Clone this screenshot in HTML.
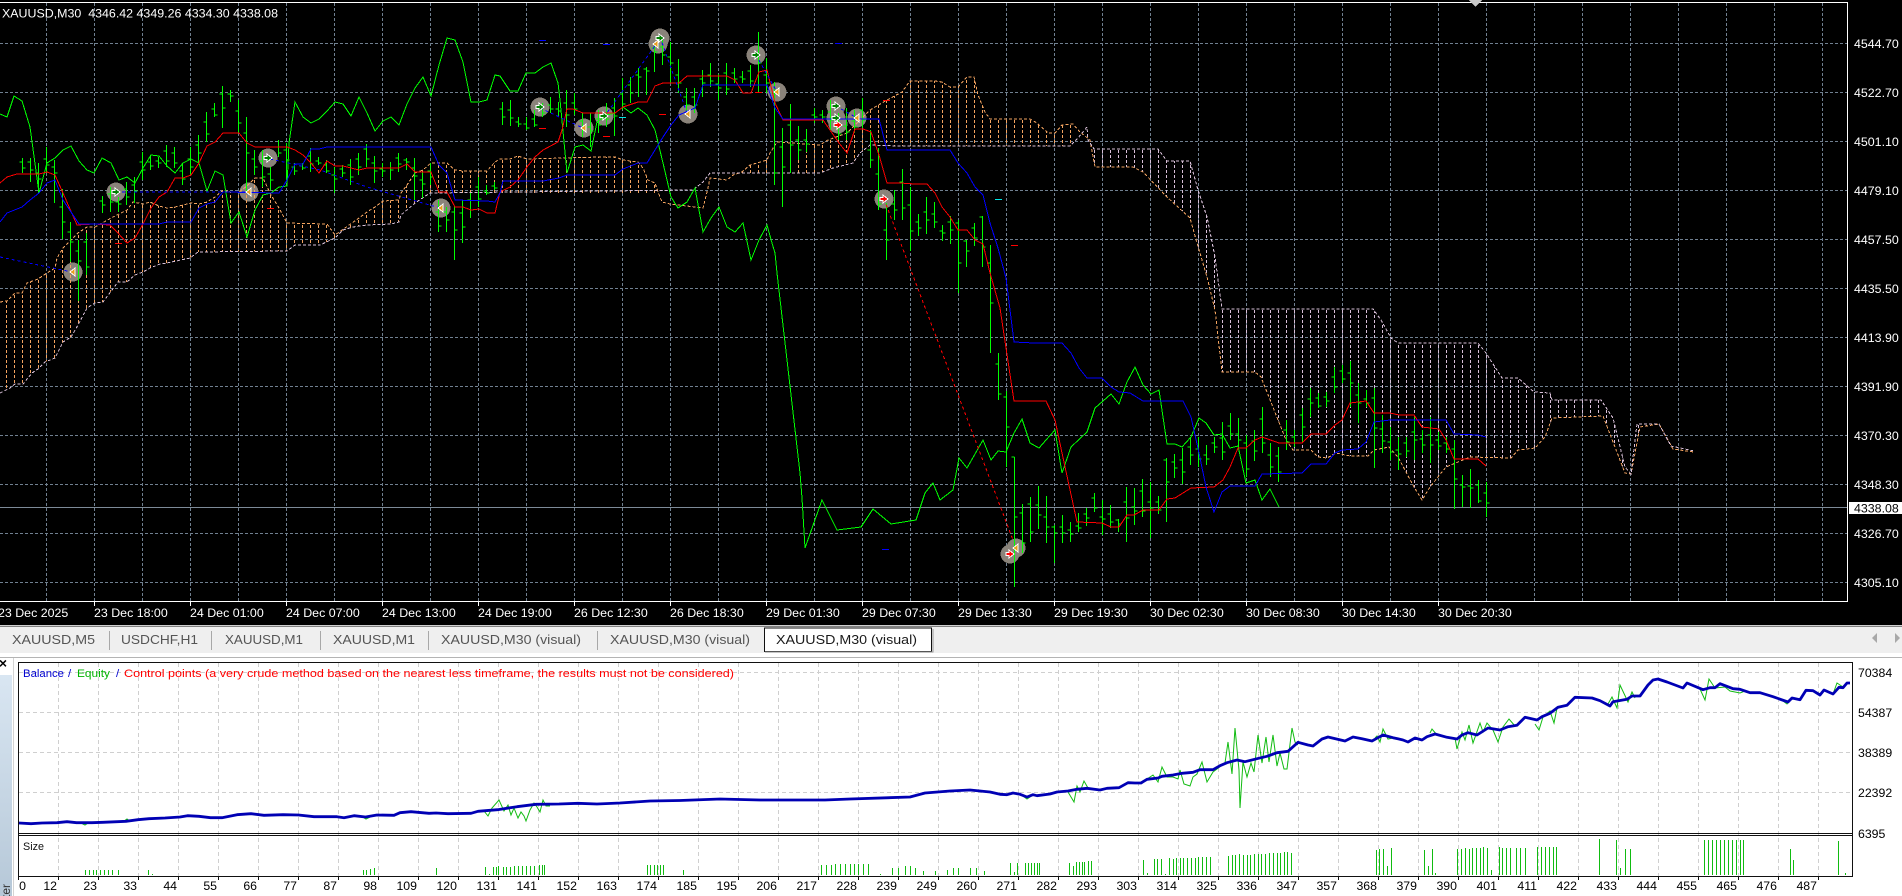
<!DOCTYPE html>
<html lang="en">
<head>
<meta charset="utf-8">
<title>XAUUSD,M30 (visual)</title>
<style>
html,body{margin:0;padding:0;background:#fff;width:1902px;height:896px;overflow:hidden}
svg{display:block;font-family:"Liberation Sans",Arial,sans-serif}
.ax{font-size:12.4px;fill:#fff}
.lb{font-size:12.3px;fill:#000}
.tb{font-size:13px;fill:#555}
</style>
</head>
<body>
<svg width="1902" height="896" viewBox="0 0 1902 896" xmlns="http://www.w3.org/2000/svg">
<defs>
<clipPath id="ca"><polygon points="0,302 7,301 15,293 22,293 27,283 38,279 47,273 55,268 57,258 63,248 78,233 87,227 95,227 113,217 127,210 133,202 143,204 150,202 159,206 167,208 175,207 183,205 191,203 199,204 207,202 215,197 223,190 231,192 239,192 247,186 255,178 263,178 271,195 279,208 287,223 327,224 335,235 359,218 367,212 375,207 383,201 399,200 401,193 407,185 415,173 423,170 431,163 447,163 455,170 463,171 487,171 495,162 500,159 510,159 518,156 527,159 600,157 615,157 623,160 638,162 643,168 648,180 655,183 658,193 500,193 430,193 415,203 401,215 399,222 391,224 367,225 353,227 343,230 335,238 320,245 295,245 287,251 198,252 190,258 167,263 160,264 150,268 143,272 135,275 127,282 118,282 112,290 103,302 95,303 87,308 78,325 71,337 63,342 55,358 45,362 38,369 32,373 23,384 15,384 10,388 0,393"/></clipPath>
<clipPath id="cb"><polygon points="735,173 742,172 750,165 767,160 770,153 777,142 820,145 828,140 847,133 870,110 887,100 902,92 910,81 935,81 942,82 950,87 958,87 967,77 974,77 978,95 985,112 990,119 1030,119 1037,123 1048,133 1055,133 1062,125 1073,124 1078,138 1070,146 900,146 870,145 860,153 853,163 833,168 820,173"/></clipPath>
<clipPath id="cc"><polygon points="1088,140 1094,149 1158,149 1167,161 1190,161 1198,190 1207,217 1215,257 1222,309 1373,309 1381,320 1391,338 1398,343 1478,343 1486,353 1502,378 1518,378 1534,392 1550,393 1552,400 1601,400 1613,418 1625,467 1631,474 1637,424 1659,424 1671,446 1694,452 1673,449 1659,424 1640,427 1631,474 1625,473 1603,416 1552,418 1545,437 1535,448 1518,450 1511,458 1470,457 1446,467 1430,487 1422,500 1414,487 1398,457 1389,447 1374,450 1368,456 1350,456 1336,453 1327,458 1318,457 1311,450 1293,450 1286,440 1261,377 1255,372 1222,372 1215,310 1207,277 1197,243 1190,218 1167,197 1143,172 1133,167 1095,167 1090,140"/></clipPath>
<g id="ar"><polygon points="-4,-1.5 -1,-1.5 -1,-4 4,0 -1,4 -1,1.5 -4,1.5" fill="#008000" stroke="#fff"/></g>
<g id="ab"><polygon points="-4,-1.5 -1,-1.5 -1,-4 4,0 -1,4 -1,1.5 -4,1.5" fill="#ff0000" stroke="#fff"/></g>
<g id="al"><polygon points="2,-4 2,4 -3,0" fill="#e8a020" stroke="#fff"/></g>
</defs>

<!-- main chart background -->
<rect x="0" y="0" width="1902" height="625" fill="#000"/>
<g shape-rendering="crispEdges">
<path d="M46.5 3V601M94.5 3V601M142.5 3V601M190.5 3V601M238.5 3V601M286.5 3V601M334.5 3V601M382.5 3V601M430.5 3V601M478.5 3V601M526.5 3V601M574.5 3V601M622.5 3V601M670.5 3V601M718.5 3V601M766.5 3V601M814.5 3V601M862.5 3V601M910.5 3V601M958.5 3V601M1006.5 3V601M1054.5 3V601M1102.5 3V601M1150.5 3V601M1198.5 3V601M1246.5 3V601M1294.5 3V601M1342.5 3V601M1390.5 3V601M1438.5 3V601M1486.5 3V601M1534.5 3V601M1582.5 3V601M1630.5 3V601M1678.5 3V601M1726.5 3V601M1774.5 3V601M1822.5 3V601" stroke="#708090" stroke-dasharray="3 2" fill="none"/>
<path d="M0 43.5H1847M0 92.5H1847M0 141.5H1847M0 190.5H1847M0 239.5H1847M0 288.5H1847M0 337.5H1847M0 386.5H1847M0 435.5H1847M0 484.5H1847M0 533.5H1847M0 582.5H1847" stroke="#708090" stroke-dasharray="3 2" fill="none"/>
<path d="M0 507.5H1848" stroke="#7d8a98" fill="none"/>

<!-- marker discs -->
<g fill="#8a837a">
<circle cx="73" cy="272" r="9.5"/><circle cx="116" cy="192" r="9.5"/><circle cx="249" cy="192" r="9.5"/><circle cx="268" cy="158" r="9.5"/><circle cx="441" cy="208" r="9.5"/>
<circle cx="540" cy="107" r="9.5"/><circle cx="584" cy="128" r="9.5"/><circle cx="604" cy="116" r="9.5"/><circle cx="688" cy="114" r="9.5"/><circle cx="660" cy="38" r="9.5"/><circle cx="658" cy="44" r="9.5"/><circle cx="756" cy="55" r="9.5"/><circle cx="777" cy="92" r="9.5"/><circle cx="836" cy="106" r="9.5"/><circle cx="836" cy="118" r="9.5"/><circle cx="838" cy="124" r="9.5"/><circle cx="857" cy="118" r="9.5"/><circle cx="884" cy="199" r="9.5"/><circle cx="1010" cy="554" r="9.5"/><circle cx="1016" cy="548" r="9.5"/>
</g>

<!-- cloud hatching -->
<path clip-path="url(#ca)" fill="none" stroke="#f4a460" stroke-dasharray="3 2" d="M6.5 150v250m8-250v250m8-250v250m8-250v250m8-250v250m8-250v250m8-250v250m8-250v250m8-250v250m8-250v250m8-250v250m8-250v250m8-250v250m8-250v250m8-250v250m8-250v250m8-250v250m8-250v250m8-250v250m8-250v250m8-250v250m8-250v250m8-250v250m8-250v250m8-250v250m8-250v250m8-250v250m8-250v250m8-250v250m8-250v250m8-250v250m8-250v250m8-250v250m8-250v250m8-250v250m8-250v250m8-250v250m8-250v250m8-250v250m8-250v250m8-250v250m8-250v250m8-250v250m8-250v250m8-250v250m8-250v250m8-250v250m8-250v250m8-250v250m8-250v250m8-250v250m8-250v250m8-250v250m8-250v250m8-250v250m8-250v250m8-250v250m8-250v250m8-250v250m8-250v250m8-250v250m8-250v250m8-250v250m8-250v250m8-250v250m8-250v250m8-250v250m8-250v250m8-250v250m8-250v250m8-250v250m8-250v250m8-250v250m8-250v250m8-250v250m8-250v250m8-250v250m8-250v250m8-250v250m8-250v250m8-250v250m8-250v250m8-250v250m8-250v250"/>
<path clip-path="url(#cb)" fill="none" stroke="#f4a460" stroke-dasharray="3 2" d="M734.5 70v110m8-110v110m8-110v110m8-110v110m8-110v110m8-110v110m8-110v110m8-110v110m8-110v110m8-110v110m8-110v110m8-110v110m8-110v110m8-110v110m8-110v110m8-110v110m8-110v110m8-110v110m8-110v110m8-110v110m8-110v110m8-110v110m8-110v110m8-110v110m8-110v110m8-110v110m8-110v110m8-110v110m8-110v110m8-110v110m8-110v110m8-110v110m8-110v110m8-110v110m8-110v110m8-110v110m8-110v110m8-110v110m8-110v110m8-110v110m8-110v110m8-110v110m8-110v110m8-110v110"/>
<path clip-path="url(#cc)" fill="none" stroke="#d8bfd8" stroke-dasharray="3 2" d="M1094.5 130v380m8-380v380m8-380v380m8-380v380m8-380v380m8-380v380m8-380v380m8-380v380m8-380v380m8-380v380m8-380v380m8-380v380m8-380v380m8-380v380m8-380v380m8-380v380m8-380v380m8-380v380m8-380v380m8-380v380m8-380v380m8-380v380m8-380v380m8-380v380m8-380v380m8-380v380m8-380v380m8-380v380m8-380v380m8-380v380m8-380v380m8-380v380m8-380v380m8-380v380m8-380v380m8-380v380m8-380v380m8-380v380m8-380v380m8-380v380m8-380v380m8-380v380m8-380v380m8-380v380m8-380v380m8-380v380m8-380v380m8-380v380m8-380v380m8-380v380m8-380v380m8-380v380m8-380v380m8-380v380m8-380v380m8-380v380m8-380v380m8-380v380m8-380v380m8-380v380m8-380v380m8-380v380m8-380v380m8-380v380m8-380v380m8-380v380m8-380v380m8-380v380m8-380v380m8-380v380m8-380v380"/>

<!-- cloud edges -->
<g fill="none" stroke-dasharray="3 2">
<polyline stroke="#f4a460" points="0,302 7,301 15,293 22,293 27,283 38,279 47,273 55,268 57,258 63,248 78,233 87,227 95,227 113,217 127,210 133,202 143,204 150,202 159,206 167,208 175,207 183,205 191,203 199,204 207,202 215,197 223,190 231,192 239,192 247,186 255,178 263,178 271,195 279,208 287,223 327,224 335,235 359,218 367,212 375,207 383,201 399,200 401,193 407,185 415,173 423,170 431,163 447,163 455,170 463,171 487,171 495,162 500,159 510,159 518,156 527,159 600,157 615,157 623,160 638,162 643,168 648,180 655,183 658,192 662,202 670,204 695,207 703,208 705,200 708,188 710,178 727,180 733,175 742,172 750,165 767,160 770,153 777,142 820,145 828,140 847,133 870,110 887,100 902,92 910,81 935,81 942,82 950,87 958,87 967,77 974,77 978,95 985,112 990,119 1030,119 1037,123 1048,133 1055,133 1062,125 1073,124 1080,132 1090,140 1095,167 1133,167 1143,172 1167,197 1190,218 1197,243 1207,277 1215,310 1222,372 1255,372 1261,377 1286,440 1293,450 1311,450 1318,457 1327,458 1336,453 1350,456 1368,456 1374,450 1389,447 1398,457 1414,487 1422,500 1430,487 1446,467 1470,457 1511,458 1518,450 1535,448 1545,437 1552,418 1603,416 1625,473 1631,474 1640,427 1659,424 1673,449 1694,452"/>
<polyline stroke="#d8bfd8" points="0,393 10,388 15,384 23,384 32,373 38,369 45,362 55,358 63,342 71,337 78,325 87,308 95,303 103,302 112,290 118,282 127,282 135,275 143,272 150,268 160,264 167,263 190,258 198,252 287,251 295,245 320,245 335,238 343,230 353,227 367,225 391,224 399,222 401,215 415,203 430,193 693,190 703,182 710,173 820,173 833,168 853,163 860,153 870,145 900,146 1070,146 1078,138 1087,127 1088,140 1094,149 1158,149 1167,161 1190,161 1198,190 1207,217 1215,257 1222,309 1373,309 1381,320 1391,338 1398,343 1478,343 1486,353 1502,378 1518,378 1534,392 1550,393 1552,400 1601,400 1613,418 1625,467 1631,474 1637,424 1659,424 1671,446 1694,451"/>
</g>

<!-- OHLC bars -->
<path fill="none" stroke="#00ff00" d="M22.5 158V173m0-5h3m-6-6h3M30.5 158V182m0-12h3m-6-8h3M38.5 163V193m0-14h3m-6-6h3M46.5 147V173m0-8h3m-6-6h3M54.5 160V203m0-30h3m-6-6h3M62.5 189V239m0-17h3m-6-15h3M70.5 222V262m0-20h3m-6-10h3M78.5 240V301m0-40h3m-6-10h3M86.5 233V275m0-8h3m-6-25h3M102.5 196V213m0-8h3m-6-4h3M110.5 187V212m0-10h3m-6-8h3M118.5 197V212m0-8h3m-6-2h3M126.5 182V205m0-8h3m-6-8h3M134.5 177V203m0-12h3m-6-6h3M142.5 152V180m0-10h3m-6-8h3M150.5 155V170m0-4h3m-6-4h3M158.5 157V168m0-5h3m-6-2h3M166.5 145V167m0-6h3m-6-10h3M174.5 147V168m0-5h3m-6-10h3M182.5 163V185m0-6h3m-6-8h3M190.5 147V175m0-8h3m-6-8h3M198.5 135V163m0-10h3m-6-8h3M206.5 112V142m0-8h3m-6-12h3M214.5 103V117m0-2h3m-6-6h3M222.5 86V128m0-20h3m-6-14h3M230.5 90V102m0-6h3m-6-2h3M238.5 100V133m0-10h3m-6-12h3M246.5 117V193m0-40h3m-6-20h3M254.5 150V175m0-8h3m-6-8h3M262.5 150V187m0-10h3m-6-16h3M270.5 167V190m0-10h3m-6-6h3M278.5 140V157m0-4h3m-6-6h3M286.5 143V180m0-20h3m-6-10h3M294.5 163V175m0-4h3m-6-4h3M302.5 163V170m0-2h3m-6-2h3M310.5 148V172m0-8h3m-6-8h3M318.5 157V165m0-2h3m-6-2h3M326.5 160V173m0-2h3m-6-6h3M334.5 167V193m0-14h3m-6-4h3M342.5 165V177m0-4h3m-6-4h3M350.5 159V185m0-8h3m-6-12h3M358.5 153V175m0-8h3m-6-8h3M366.5 144V167m0-8h3m-6-10h3M374.5 156V183m0-12h3m-6-8h3M382.5 163V177m0-6h3m-6-2h3M390.5 162V180m0-10h3m-6-2h3M398.5 153V172m0-8h3m-6-6h3M406.5 158V170m0-8h3m-6-2h3M414.5 158V200m0-24h3m-6-8h3M422.5 172V198m0-14h3m-6-4h3M430.5 163V185m0-8h3m-6-6h3M438.5 200V232m0-6h3m-6-14h3M446.5 207V232m0-12h3m-6-8h3M454.5 206V260m0-30h3m-6-18h3M462.5 200V243m0-16h3m-6-14h3M470.5 193V218m0-8h3m-6-10h3M478.5 177V207m0-8h3m-6-12h3M486.5 185V195m0-2h3m-6-2h3M494.5 182V190m0-2h3m-6-2h3M502.5 102V125m0-8h3m-6-8h3M510.5 100V126m0-8h3m-6-8h3M518.5 117V127m0-3h3m-6-2h3M526.5 117V130m0-2h3m-6-4h3M534.5 110V127m0-2h3m-6-6h3M542.5 103V117m0-4h3m-6-4h3M550.5 97V113m0-4h3m-6-4h3M558.5 102V117m0-6h3m-6-2h3M566.5 90V127m0-12h3m-6-12h3M574.5 93V115m0-6h3m-6-6h3M582.5 113V137m0-8h3m-6-8h3M590.5 113V147m0-16h3m-6-4h3M598.5 110V133m0-8h3m-6-6h3M606.5 103V127m0-8h3m-6-6h3M614.5 98V136m0-20h3m-6-8h3M622.5 78V110m0-6h3m-6-10h3M630.5 77V103m0-10h3m-6-8h3M638.5 68V97m0-20h3m-6-2h3M646.5 67V95m0-24h3m-6-2h3M654.5 43V72m0-20h3m-6-4h3M662.5 40V65m0-10h3m-6-8h3M670.5 42V83m0-20h3m-6-6h3M678.5 59V93m0-10h3m-6-8h3M686.5 88V113m0-8h3m-6-8h3M694.5 88V113m0-8h3m-6-8h3M702.5 70V97m0-14h3m-6-4h3M710.5 63V87m0-6h3m-6-6h3M718.5 74V100m0-12h3m-6-4h3M726.5 63V95m0-6h3m-6-16h3M734.5 68V83m0-4h3m-6-6h3M742.5 71V83m0-4h3m-6-2h3M750.5 65V87m0-6h3m-6-10h3M758.5 32V93m0-30h3m-6-8h3M766.5 58V93m0-10h3m-6-8h3M774.5 82V185m0-12h3m-6-80h3M782.5 128V207m0-40h3m-6-20h3M790.5 104V173m0-28h3m-6-20h3M798.5 126V160m0-10h3m-6-10h3M806.5 129V152m0-8h3m-6-4h3M814.5 108V123m0-6h3m-6-2h3M822.5 110V123m0-6h3m-6-2h3M830.5 100V130m0-10h3m-6-8h3M838.5 113V140m0-6h3m-6-6h3M846.5 108V140m0-8h3m-6-6h3M854.5 110V133m0-6h3m-6-6h3M862.5 98V128m0-8h3m-6-10h3M870.5 130V168m0-8h3m-6-10h3M878.5 148V210m0-6h3m-6-30h3M886.5 203V260m0-20h3m-6-10h3M894.5 190V220m0-10h3m-6-6h3M902.5 169V220m0-12h3m-6-26h3M910.5 187V251m0-20h3m-6-26h3M918.5 214V236m0-8h3m-6-6h3M926.5 197V234m0-14h3m-6-8h3M934.5 202V228m0-6h3m-6-8h3M942.5 225V241m0-8h3m-6-2h3M950.5 216V244m0-14h3m-6-8h3M958.5 220V293m0-30h3m-6-40h3M966.5 240V267m0-16h3m-6-10h3M974.5 223V246m0-8h3m-6-10h3M982.5 216V267m0-20h3m-6-30h3M990.5 245V353m0-50h3m-6-40h3M998.5 353V400m0-6h3m-6-30h3M1006.5 391V467m0-40h3m-6-30h3M1014.5 457V587m0-70h3m-6-60h3M1022.5 504V553m0-10h3m-6-30h3M1030.5 497V542m0-10h3m-6-28h3M1038.5 486V529m0-14h3m-6-10h3M1046.5 496V543m0-16h3m-6-10h3M1054.5 525V563m0-30h3m-6-6h3M1062.5 515V543m0-10h3m-6-6h3M1070.5 522V542m0-8h3m-6-4h3M1078.5 513V532m0-4h3m-6-2h3M1086.5 508V526m0-8h3m-6-4h3M1094.5 493V512m0-4h3m-6-10h3M1102.5 500V535m0-16h3m-6-2h3M1110.5 505V528m0-6h3m-6-8h3M1118.5 519V532m0-8h3m-6-4h3M1126.5 487V542m0-24h3m-6-16h3M1134.5 488V525m0-14h3m-6-4h3M1142.5 479V517m0-6h3m-6-20h3M1150.5 482V538m0-30h3m-6-6h3M1158.5 496V514m0-4h3m-6-8h3M1166.5 458V522m0-40h3m-6-22h3M1174.5 454V478m0-10h3m-6-6h3M1182.5 448V484m0-12h3m-6-12h3M1190.5 437V465m0-10h3m-6-8h3M1198.5 437V467m0-8h3m-6-10h3M1206.5 445V465m0-6h3m-6-4h3M1214.5 437V453m0-6h3m-6-4h3M1222.5 422V460m0-8h3m-6-14h3M1230.5 413V440m0-6h3m-6-8h3M1238.5 418V448m0-8h3m-6-6h3M1246.5 435V477m0-8h3m-6-26h3M1254.5 430V461m0-10h3m-6-10h3M1262.5 407V453m0-10h3m-6-24h3M1270.5 443V477m0-10h3m-6-12h3M1278.5 447V482m0-10h3m-6-16h3M1286.5 420V450m0-8h3m-6-12h3M1294.5 430V447m0-4h3m-6-6h3M1302.5 408V443m0-16h3m-6-12h3M1310.5 388V417m0-14h3m-6-4h3M1318.5 393V408m0-2h3m-6-8h3M1326.5 392V407m0-6h3m-6-4h3M1334.5 367V393m0-6h3m-6-10h3M1342.5 365V383m0-4h3m-6-8h3M1350.5 361V407m0-24h3m-6-10h3M1358.5 383V423m0-20h3m-6-8h3M1366.5 390V407m0-4h3m-6-4h3M1374.5 388V468m0-40h3m-6-30h3M1382.5 415V453m0-12h3m-6-12h3M1390.5 427V460m0-8h3m-6-10h3M1398.5 437V470m0-16h3m-6-4h3M1406.5 437V457m0-6h3m-6-8h3M1414.5 417V460m0-20h3m-6-8h3M1422.5 430V453m0-8h3m-6-6h3M1430.5 417V463m0-18h3m-6-10h3M1438.5 432V450m0-4h3m-6-6h3M1446.5 437V453m0-4h3m-6-6h3M1454.5 440V509m0-30h3m-6-30h3M1462.5 475V507m0-20h3m-6-2h3M1470.5 469V508m0-20h3m-6-2h3M1478.5 480V503m0-2h3m-6-16h3M1486.5 482V517m0-14h3m-6-10h3"/>

<!-- chikou -->
<polyline fill="none" stroke="#00ff00" points="0,114 7,117 14,96 22,101 30,127 39,193 47,163 55,158 63,150 71,146 79,161 87,170 94,173 102,158 111,163 119,180 127,177 135,183 143,168 151,155 159,156 167,166 175,173 183,163 191,159 199,163 207,191 215,171 223,175 231,223 239,212 247,237 255,210 263,195 271,193 279,187 287,186 289,143 295,102 303,117 311,123 319,119 327,111 335,102 343,104 351,116 359,97 367,113 375,131 383,121 391,117 399,125 407,104 415,88 423,77 431,96 439,65 447,38 455,40 463,62 471,102 479,102 487,100 495,75 500,76 510,91 518,91 526,73 535,73 543,67 551,63 558,83 560,100 567,173 575,147 583,145 591,151 597,122 607,115 615,113 623,107 631,113 638,108 647,115 655,130 663,163 671,197 678,208 687,202 695,188 703,232 711,218 719,207 727,227 735,232 743,223 751,260 759,240 767,225 772,243 775,253 777,273 800,473 802,498 805,548 822,500 837,530 861,527 873,509 891,524 916,520 925,493 933,483 940,500 953,490 959,458 967,468 983,440 991,460 998,451 1006,452 1014,433 1022,419 1030,443 1039,448 1046,440 1055,430 1062,473 1071,447 1087,432 1095,408 1111,394 1119,404 1127,382 1135,367 1143,385 1151,394 1159,390 1167,444 1175,444 1182,447 1191,437 1199,418 1206,423 1214,435 1222,434 1230,448 1238,446 1246,483 1255,480 1262,500 1270,489 1279,507"/>
<!-- tenkan -->
<polyline fill="none" stroke="#ff0000" points="0,183 7,177 17,174 39,174 47,172 55,175 63,193 77,225 94,224 110,225 118,233 127,243 135,238 143,224 151,208 159,197 167,192 175,178 183,178 191,175 199,163 207,146 215,142 223,133 239,133 247,143 255,147 287,147 295,150 303,155 311,163 319,173 327,161 335,166 343,166 359,170 367,168 399,168 407,164 415,172 431,172 439,192 447,192 455,207 463,207 471,210 479,209 487,213 495,213 500,192 510,187 518,180 527,167 535,157 543,150 558,142 562,130 567,109 573,109 583,113 615,113 623,107 638,102 647,102 655,86 663,83 679,83 687,76 727,76 735,80 743,93 751,93 759,72 767,70 775,103 783,120 823,120 839,143 847,153 855,129 863,129 871,132 879,155 887,183 900,183 915,184 927,184 935,193 942,207 950,217 958,230 967,230 975,240 983,244 990,273 1000,308 1014,401 1046,401 1055,420 1062,453 1077,522 1102,523 1111,527 1119,527 1127,515 1134,515 1143,510 1159,510 1167,499 1175,498 1191,488 1214,487 1223,480 1230,467 1238,448 1246,448 1255,440 1262,437 1279,443 1302,443 1311,434 1326,434 1335,425 1342,420 1350,403 1366,401 1374,413 1390,413 1399,415 1414,415 1422,427 1439,429 1446,440 1454,459 1478,459 1486,466"/>
<!-- kijun -->
<polyline fill="none" stroke="#0000ff" points="0,222 7,213 22,207 30,200 39,193 47,183 55,180 63,200 79,224 159,224 167,222 191,222 199,208 207,204 215,202 223,192 279,193 287,180 295,164 303,164 311,149 319,149 327,147 431,147 439,165 447,173 455,200 487,201 495,202 500,193 503,181 543,181 559,178 567,175 615,175 623,169 638,163 647,163 655,150 663,137 671,125 679,115 695,108 703,85 767,85 775,108 783,119 879,119 887,150 950,150 958,163 967,173 975,187 983,195 990,223 998,248 1006,278 1014,342 1034,343 1062,343 1071,353 1079,368 1087,378 1102,378 1111,387 1119,392 1130,393 1143,401 1183,401 1191,417 1199,453 1206,487 1214,512 1222,492 1230,486 1255,486 1262,474 1302,473 1311,464 1326,464 1335,453 1342,450 1358,449 1366,442 1374,422 1390,420 1446,420 1454,434 1478,435 1486,437"/>

<!-- trade dashes -->
<g fill="none" stroke="#0000ff" stroke-dasharray="3 3">
<polyline points="116,192 250,192"/><polyline points="270,159 320,170 367,187 440,208"/><polyline points="0,257 72,272"/><polyline points="540,108 583,128"/><polyline points="604,117 657,43"/><polyline points="660,37 687,113"/><polyline points="756,55 777,92"/><polyline points="836,106 857,118"/>
</g>
<polyline points="884,199 1013,540" fill="none" stroke="#ff0000" stroke-dasharray="3 3"/>
<path fill="none" stroke="#0000ff" d="M539 40.5h7M603 44.5h7M835 43.5h7M882 549.5h7"/>
<path fill="none" stroke="#ff0000" d="M539 128.5h7M603 136.5h7M659 114.5h7M755 92.5h7M883 100.5h7M267 208.5h7M115 243.5h7M1011 245.5h7"/>
<path fill="none" stroke="#00e5e5" d="M619 117.5h7M995 199.5h7"/>

<!-- arrows -->
<use href="#al" x="73" y="272"/><use href="#ar" x="116" y="192"/><use href="#al" x="249" y="192"/><use href="#ar" x="268" y="158"/><use href="#al" x="441" y="208"/>
<use href="#ar" x="540" y="107"/><use href="#al" x="584" y="128"/><use href="#ar" x="604" y="116"/><use href="#al" x="688" y="114"/><use href="#al" x="656" y="44"/><use href="#ar" x="660" y="38"/><use href="#ar" x="756" y="55"/><use href="#al" x="777" y="92"/><use href="#ar" x="836" y="106"/><use href="#ar" x="836" y="118"/><use href="#ab" x="838" y="125"/><use href="#al" x="857" y="118"/><use href="#ab" x="884" y="199"/><use href="#al" x="1016" y="548"/><use href="#ab" x="1010" y="554"/>

<!-- chart frame -->
<path d="M0 2.5H1847.5V601.5H0" fill="none" stroke="#fff"/>
<path d="M94.5 601V606M190.5 601V606M286.5 601V606M382.5 601V606M478.5 601V606M574.5 601V606M670.5 601V606M766.5 601V606M862.5 601V606M958.5 601V606M1054.5 601V606M1150.5 601V606M1246.5 601V606M1342.5 601V606M1438.5 601V606" stroke="#fff" fill="none"/>
<polygon points="1469,0 1482,0 1475.5,7" fill="#c8c8c8"/>
<rect x="1849" y="502" width="53" height="12" fill="#fff"/>
</g>

<!-- main text -->
<text x="2" y="17.5" class="ax" textLength="276" lengthAdjust="spacingAndGlyphs" xml:space="preserve">XAUUSD,M30  4346.42 4349.26 4334.30 4338.08</text>
<g class="ax">
<text x="1854" y="48">4544.70</text><text x="1854" y="97">4522.70</text><text x="1854" y="146">4501.10</text><text x="1854" y="195">4479.10</text><text x="1854" y="244">4457.50</text><text x="1854" y="293">4435.50</text><text x="1854" y="342">4413.90</text><text x="1854" y="391">4391.90</text><text x="1854" y="440">4370.30</text><text x="1854" y="489">4348.30</text><text x="1854" y="538">4326.70</text><text x="1854" y="587">4305.10</text>
</g>
<text x="1854" y="512.5" style="font-size:12.4px;fill:#000">4338.08</text>
<g class="ax">
<text x="-2" y="617">23 Dec 2025</text><text x="94" y="617">23 Dec 18:00</text><text x="190" y="617">24 Dec 01:00</text><text x="286" y="617">24 Dec 07:00</text><text x="382" y="617">24 Dec 13:00</text><text x="478" y="617">24 Dec 19:00</text><text x="574" y="617">26 Dec 12:30</text><text x="670" y="617">26 Dec 18:30</text><text x="766" y="617">29 Dec 01:30</text><text x="862" y="617">29 Dec 07:30</text><text x="958" y="617">29 Dec 13:30</text><text x="1054" y="617">29 Dec 19:30</text><text x="1150" y="617">30 Dec 02:30</text><text x="1246" y="617">30 Dec 08:30</text><text x="1342" y="617">30 Dec 14:30</text><text x="1438" y="617">30 Dec 20:30</text>
</g>

<!-- tab bar -->
<g shape-rendering="crispEdges">
<rect x="0" y="625" width="1902" height="1" fill="#d0d0d0"/>
<rect x="0" y="626" width="1902" height="1" fill="#808080"/>
<rect x="0" y="627" width="1902" height="26" fill="#efefef"/>
<rect x="0" y="657" width="1902" height="1" fill="#b4b4b4"/>
<path d="M109.5 631V650M211.5 631V650M320.5 631V650M428.5 631V650M597.5 631V650" stroke="#a8a8a8" fill="none"/>
<rect x="764" y="628" width="168" height="23" fill="#fff"/>
<path d="M764.5 651V628H931.5V651.5H764" fill="none" stroke="#111"/>
<path d="M933 629V652H765" fill="none" stroke="#999"/>
</g>
<text x="12" y="644" class="tb" textLength="83" lengthAdjust="spacingAndGlyphs">XAUUSD,M5</text>
<text x="121" y="644" class="tb" textLength="77" lengthAdjust="spacingAndGlyphs">USDCHF,H1</text>
<text x="225" y="644" class="tb" textLength="78" lengthAdjust="spacingAndGlyphs">XAUUSD,M1</text>
<text x="333" y="644" class="tb" textLength="82" lengthAdjust="spacingAndGlyphs">XAUUSD,M1</text>
<text x="441" y="644" class="tb" textLength="140" lengthAdjust="spacingAndGlyphs">XAUUSD,M30 (visual)</text>
<text x="610" y="644" class="tb" textLength="140" lengthAdjust="spacingAndGlyphs">XAUUSD,M30 (visual)</text>
<text x="776" y="644" class="tb" style="fill:#1a1a1a" textLength="141" lengthAdjust="spacingAndGlyphs">XAUUSD,M30 (visual)</text>
<polygon points="1877,633 1877,643 1872,638" fill="#a8a8a8"/>
<polygon points="1895,633 1895,643 1900,638" fill="#a8a8a8"/>

<!-- left strip -->
<defs><linearGradient id="gs" x1="0" y1="0" x2="0" y2="1"><stop offset="0" stop-color="#d9e6f2"/><stop offset="1" stop-color="#b6c8d8"/></linearGradient></defs>
<rect x="0" y="675" width="12" height="221" fill="url(#gs)"/>
<rect x="13" y="658" width="1" height="238" fill="#d4d4d4"/>
<text x="3" y="668" text-anchor="middle" style="font-size:14px;font-weight:bold;fill:#000">×</text>
<text transform="translate(10,884) rotate(-90)" text-anchor="end" x="0" y="0" style="font-size:12px;fill:#333">Tester</text>

<!-- lower chart -->
<g shape-rendering="crispEdges">
<path d="M58.5 663V876M98.5 663V876M138.5 663V876M178.5 663V876M218.5 663V876M258.5 663V876M298.5 663V876M338.5 663V876M378.5 663V876M418.5 663V876M458.5 663V876M498.5 663V876M538.5 663V876M578.5 663V876M618.5 663V876M658.5 663V876M698.5 663V876M738.5 663V876M778.5 663V876M818.5 663V876M858.5 663V876M898.5 663V876M938.5 663V876M978.5 663V876M1018.5 663V876M1058.5 663V876M1098.5 663V876M1138.5 663V876M1178.5 663V876M1218.5 663V876M1258.5 663V876M1298.5 663V876M1338.5 663V876M1378.5 663V876M1418.5 663V876M1458.5 663V876M1498.5 663V876M1538.5 663V876M1578.5 663V876M1618.5 663V876M1658.5 663V876M1698.5 663V876M1738.5 663V876M1778.5 663V876M1818.5 663V876" stroke="#cfcfcf" stroke-dasharray="4 3" fill="none"/>
<path d="M19 672.5H1852M19 712.5H1852M19 752.5H1852M19 792.5H1852" stroke="#cfcfcf" stroke-dasharray="4 3" fill="none"/>
<!-- size bars -->
<path fill="none" stroke="#11bb11" d="M85.5 870V875M89.5 870V875M93.5 870V875M96.5 870V875M100.5 870V875M104.5 870V875M108.5 870V875M112.5 870V875M118.5 870V875M148.5 870V875M152.5 874V875M363.5 870V875M366.5 870V875M370.5 869V875M374.5 868V875M436.5 868V875M485.5 867V875M489.5 874V875M493.5 867V875M496.5 867V875M498.5 866V875M503.5 867V875M506.5 867V875M510.5 867V875M514.5 866V875M518.5 866V875M522.5 866V875M526.5 866V875M530.5 866V875M534.5 866V875M539.5 865V875M542.5 865V875M544.5 865V875M647.5 865V875M650.5 865V875M654.5 865V875M657.5 865V875M660.5 865V875M663.5 865V875M683.5 870V875M821.5 865V875M826.5 865V875M831.5 865V875M835.5 864V875M840.5 864V875M845.5 864V875M850.5 864V875M854.5 864V875M858.5 864V875M863.5 864V875M868.5 864V875M880.5 874V875M892.5 868V875M898.5 868V875M905.5 866V875M910.5 866V875M915.5 868V875M923.5 871V875M935.5 871V875M947.5 870V875M953.5 868V875M958.5 868V875M970.5 868V875M976.5 868V875M984.5 871V875M1010.5 863V875M1014.5 872V875M1017.5 863V875M1025.5 863V875M1028.5 863V875M1031.5 863V875M1034.5 863V875M1037.5 863V875M1039.5 863V875M1069.5 863V875M1073.5 866V875M1076.5 862V875M1079.5 862V875M1082.5 862V875M1084.5 862V875M1088.5 861V875M1091.5 861V875M1143.5 860V875M1147.5 873V875M1154.5 859V875M1157.5 859V875M1161.5 859V875M1165.5 874V875M1169.5 858V875M1173.5 859V875M1176.5 858V875M1180.5 858V875M1183.5 858V875M1187.5 858V875M1191.5 858V875M1195.5 858V875M1198.5 857V875M1202.5 857V875M1206.5 857V875M1210.5 857V875M1228.5 856V875M1232.5 855V875M1235.5 855V875M1239.5 854V875M1243.5 855V875M1247.5 855V875M1250.5 855V875M1254.5 854V875M1258.5 854V875M1261.5 854V875M1265.5 854V875M1269.5 853V875M1273.5 853V875M1277.5 853V875M1280.5 853V875M1284.5 852V875M1287.5 852V875M1291.5 853V875M1376.5 850V875M1379.5 849V875M1383.5 849V875M1387.5 866V875M1391.5 848V875M1424.5 850V875M1428.5 866V875M1432.5 849V875M1435.5 873V875M1457.5 849V875M1461.5 849V875M1465.5 848V875M1469.5 849V875M1472.5 848V875M1476.5 848V875M1480.5 848V875M1483.5 847V875M1487.5 848V875M1491.5 870V875M1499.5 847V875M1502.5 848V875M1506.5 848V875M1510.5 848V875M1516.5 848V875M1520.5 848V875M1525.5 848V875M1537.5 847V875M1541.5 847V875M1545.5 847V875M1549.5 847V875M1553.5 847V875M1556.5 847V875M1599.5 839V875M1616.5 840V875M1620.5 868V875M1625.5 849V875M1630.5 849V875M1704.5 840V875M1708.5 840V875M1712.5 840V875M1716.5 840V875M1720.5 840V875M1724.5 840V875M1728.5 840V875M1732.5 840V875M1736.5 840V875M1740.5 840V875M1743.5 840V875M1790.5 849V875M1793.5 860V875M1838.5 841V875M1845.5 873V875"/>
<path d="M18.5 662.5H1852.5V876.5H18.5ZM19 833.5H1852M19 835.5H1852" fill="none" stroke="#111"/>
<path d="M18.5 877V880M58.5 877V880M98.5 877V880M138.5 877V880M178.5 877V880M218.5 877V880M258.5 877V880M298.5 877V880M338.5 877V880M378.5 877V880M418.5 877V880M458.5 877V880M498.5 877V880M538.5 877V880M578.5 877V880M618.5 877V880M658.5 877V880M698.5 877V880M738.5 877V880M778.5 877V880M818.5 877V880M858.5 877V880M898.5 877V880M938.5 877V880M978.5 877V880M1018.5 877V880M1058.5 877V880M1098.5 877V880M1138.5 877V880M1178.5 877V880M1218.5 877V880M1258.5 877V880M1298.5 877V880M1338.5 877V880M1378.5 877V880M1418.5 877V880M1458.5 877V880M1498.5 877V880M1538.5 877V880M1578.5 877V880M1618.5 877V880M1658.5 877V880M1698.5 877V880M1738.5 877V880M1778.5 877V880M1818.5 877V880" stroke="#111" fill="none"/>
</g>

<!-- equity spikes -->
<path fill="none" stroke="#11bb11" d="M81 823L85 825 88 823M124 821L127 819 130 821M361 816L366 819 370 817M484 811L488 816 492 808 499 800 504 811 508 805 511 815 514 808 518 818 521 812 524 816 526 821 530 810 534 803 537 807 540 812 543 800 546 806 550 806M1020 794L1027 799 1033 795M1068 792L1074 802 1077 786 1080 792 1084 781 1088 788 1095 789M1147 779L1153 775 1158 782 1162 767 1167 777 1173 777 1178 779 1180 770 1184 784 1190 786 1193 777 1197 774 1202 762 1207 782 1213 772 1225 763 1228 742 1232 774 1235 728 1239 770 1240 808 1243 762 1247 777 1251 763 1254 772 1258 735 1262 763 1266 737 1269 762 1273 735 1277 766 1280 753 1284 769 1287 769 1292 728 1295 742 1298 745M1375 738L1377 736 1380 742 1383 729 1388 739 1393 738M1430 733L1432 729 1437 735M1455 738L1457 749 1462 732 1465 740 1469 725 1473 743 1480 723 1483 732 1487 723 1493 730 1498 742 1503 727 1509 719 1515 726 1520 722M1535 724L1539 730 1543 717 1550 711 1554 723 1557 708 1562 707M1608 704L1612 697 1617 708 1620 685 1628 702 1632 692 1635 698M1700 689L1705 700 1709 679 1715 688 1725 687 1730 691 1740 693 1745 691 1750 693M1783 701L1787 704 1792 698M1833 694L1837 683 1843 687"/>
<!-- balance -->
<polyline fill="none" stroke="#0000b4" stroke-width="2.8" stroke-linejoin="round" points="19,823 31,823.7 42,823 57,822.7 67,821.7 76.5,822.7 92,822.7 103,822.3 126,821.3 138,819.7 149,818.7 165,818 180,817 187.5,815.7 199,816.3 210.5,817.7 222,817.7 237,814.7 251,813.7 264,815.3 283,814.7 298.5,815 314,816.7 337,816.7 344,817.7 354,815.7 365.5,817 377,815 394,815.3 400,812.7 411,811.7 429,813.3 436,813 448,813.7 471,813.3 478,811.3 497.5,809.7 517,806.7 536,804.3 559,804 578,803.3 597,804 620,803 650,801 680,800.5 720,799 760,800 800,800 825,800 850,799 910,797 925,793 950,791 970,790 990,792 1000,794.3 1007,794.7 1013,793 1020,794.3 1027,797 1033,794.7 1037,795.7 1050,794 1057,792 1068,791 1077,789.3 1087,788.3 1100,790 1107,788.3 1119,787.7 1128,782.7 1135,783 1141,783 1147,779.3 1158,778 1162,776.3 1173,775 1182,773.3 1193,772.3 1200,769.7 1213,769.7 1220,765.7 1227,762.7 1237,760 1245,761.7 1257,758.7 1267,756.3 1277,752.7 1288,751.3 1298,742.3 1308,745 1313,746 1322,739 1328,737 1345,741 1353,737 1362,738.7 1372,741 1378,737.7 1383,735 1393,737.7 1403,740 1408,742 1415,738 1422,740 1427,736.7 1435,734 1447,737.3 1457,739 1462,735 1468,732.7 1477,735 1488,728 1500,730 1508,726.7 1517,725.3 1525,717.3 1537,720 1542,716.7 1550,713.3 1558,707.3 1567,705.3 1575,697.3 1592,698 1600,700.7 1610,706 1613,701.7 1627,699.3 1632,696 1640,696 1648,685 1653,680 1658,679 1667,682 1683,688 1687,683 1703,689.7 1710,687.7 1715,687.7 1720,683.7 1733,688.7 1740,689.3 1750,692.7 1760,692.7 1773,696.7 1788,702 1792,698 1800,699.7 1806,690.3 1813,690.7 1820,695 1824,690 1833,694 1839,687.3 1843,687.7 1847,683 1850,683"/>

<!-- legend -->
<g style="font-size:11.4px">
<text x="23" y="677" fill="#0000d0" textLength="41" lengthAdjust="spacingAndGlyphs">Balance</text>
<text x="68" y="677" fill="#0000d0">/</text>
<text x="77" y="677" fill="#00b400" textLength="33" lengthAdjust="spacingAndGlyphs">Equity</text>
<text x="116" y="677" fill="#0000d0">/</text>
<text x="124" y="677" fill="#ff0000" textLength="610" lengthAdjust="spacingAndGlyphs">Control points (a very crude method based on the nearest less timeframe, the results must not be considered)</text>
<text x="23" y="850" fill="#111" textLength="21" lengthAdjust="spacingAndGlyphs">Size</text>
</g>
<g class="lb">
<text x="1858" y="677">70384</text><text x="1858" y="717">54387</text><text x="1858" y="757">38389</text><text x="1858" y="797">22392</text><text x="1858" y="838">6395</text>
</g>
<g class="lb" text-anchor="end">
<text x="26" y="890">0</text><text x="57" y="890">12</text><text x="97" y="890">23</text><text x="137" y="890">33</text><text x="177" y="890">44</text><text x="217" y="890">55</text><text x="257" y="890">66</text><text x="297" y="890">77</text><text x="337" y="890">87</text><text x="377" y="890">98</text><text x="417" y="890">109</text><text x="457" y="890">120</text><text x="497" y="890">131</text><text x="537" y="890">141</text><text x="577" y="890">152</text><text x="617" y="890">163</text><text x="657" y="890">174</text><text x="697" y="890">185</text><text x="737" y="890">195</text><text x="777" y="890">206</text><text x="817" y="890">217</text><text x="857" y="890">228</text><text x="897" y="890">239</text><text x="937" y="890">249</text><text x="977" y="890">260</text><text x="1017" y="890">271</text><text x="1057" y="890">282</text><text x="1097" y="890">293</text><text x="1137" y="890">303</text><text x="1177" y="890">314</text><text x="1217" y="890">325</text><text x="1257" y="890">336</text><text x="1297" y="890">347</text><text x="1337" y="890">357</text><text x="1377" y="890">368</text><text x="1417" y="890">379</text><text x="1457" y="890">390</text><text x="1497" y="890">401</text><text x="1537" y="890">411</text><text x="1577" y="890">422</text><text x="1617" y="890">433</text><text x="1657" y="890">444</text><text x="1697" y="890">455</text><text x="1737" y="890">465</text><text x="1777" y="890">476</text><text x="1817" y="890">487</text>
</g>
</svg>
</body>
</html>
